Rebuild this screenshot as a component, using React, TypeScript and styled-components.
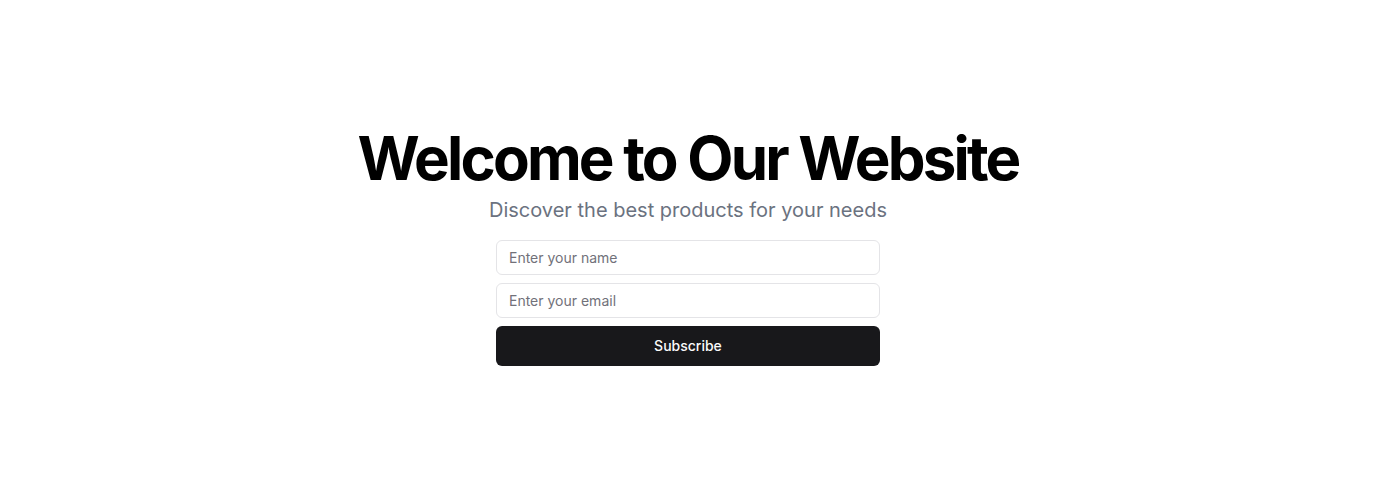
import React from 'react'
import styled, { createGlobalStyle } from 'styled-components'

const GlobalStyle = createGlobalStyle`
    * { box-sizing: border-box; }
    body {
        margin: 0;
        background: #ffffff;
        font-family: Inter, "Noto Sans", sans-serif;
    }
`

const Page = styled.main`
    min-height: 494px;
    display: flex;
    align-items: center;
    justify-content: center;
`

const Hero = styled.section`
    display: flex;
    flex-direction: column;
    align-items: center;
    text-align: center;
`

const Title = styled.h1`
    margin: 0;
    font-size: 60px;
    line-height: 1;
    font-weight: 700;
    letter-spacing: -2.8px;
    color: #000000;
`

const Subtitle = styled.p`
    margin: 8px 0 0;
    font-size: 20px;
    line-height: 28px;
    color: #6b7280;
`

const Form = styled.form`
    width: 384px;
    margin-top: 16px;
    display: flex;
    flex-direction: column;
    gap: 8px;
`

const Input = styled.input`
    height: 35px;
    width: 100%;
    padding: 4px 12px;
    border: 1px solid #e4e4e7;
    border-radius: 6px;
    font-family: inherit;
    font-size: 14px;
    color: #09090b;
    background: #ffffff;
    outline: none;
    &::placeholder {
        color: #71717a;
    }
`

const Button = styled.button`
    height: 40px;
    width: 100%;
    padding: 0 16px 1px;
    border: none;
    border-radius: 6px;
    background: #18181b;
    color: #fafafa;
    font-family: inherit;
    font-size: 14px;
    font-weight: 500;
    cursor: pointer;
`

const App = () => {
  return (
    <>
      <GlobalStyle />
      <Page>
        <Hero>
          <Title>Welcome to Our Website</Title>
          <Subtitle>Discover the best products for your needs</Subtitle>
          <Form onSubmit={(e) => e.preventDefault()}>
            <Input type="text" placeholder="Enter your name" />
            <Input type="email" placeholder="Enter your email" />
            <Button type="submit">Subscribe</Button>
          </Form>
        </Hero>
      </Page>
    </>
  )
}

export default App
